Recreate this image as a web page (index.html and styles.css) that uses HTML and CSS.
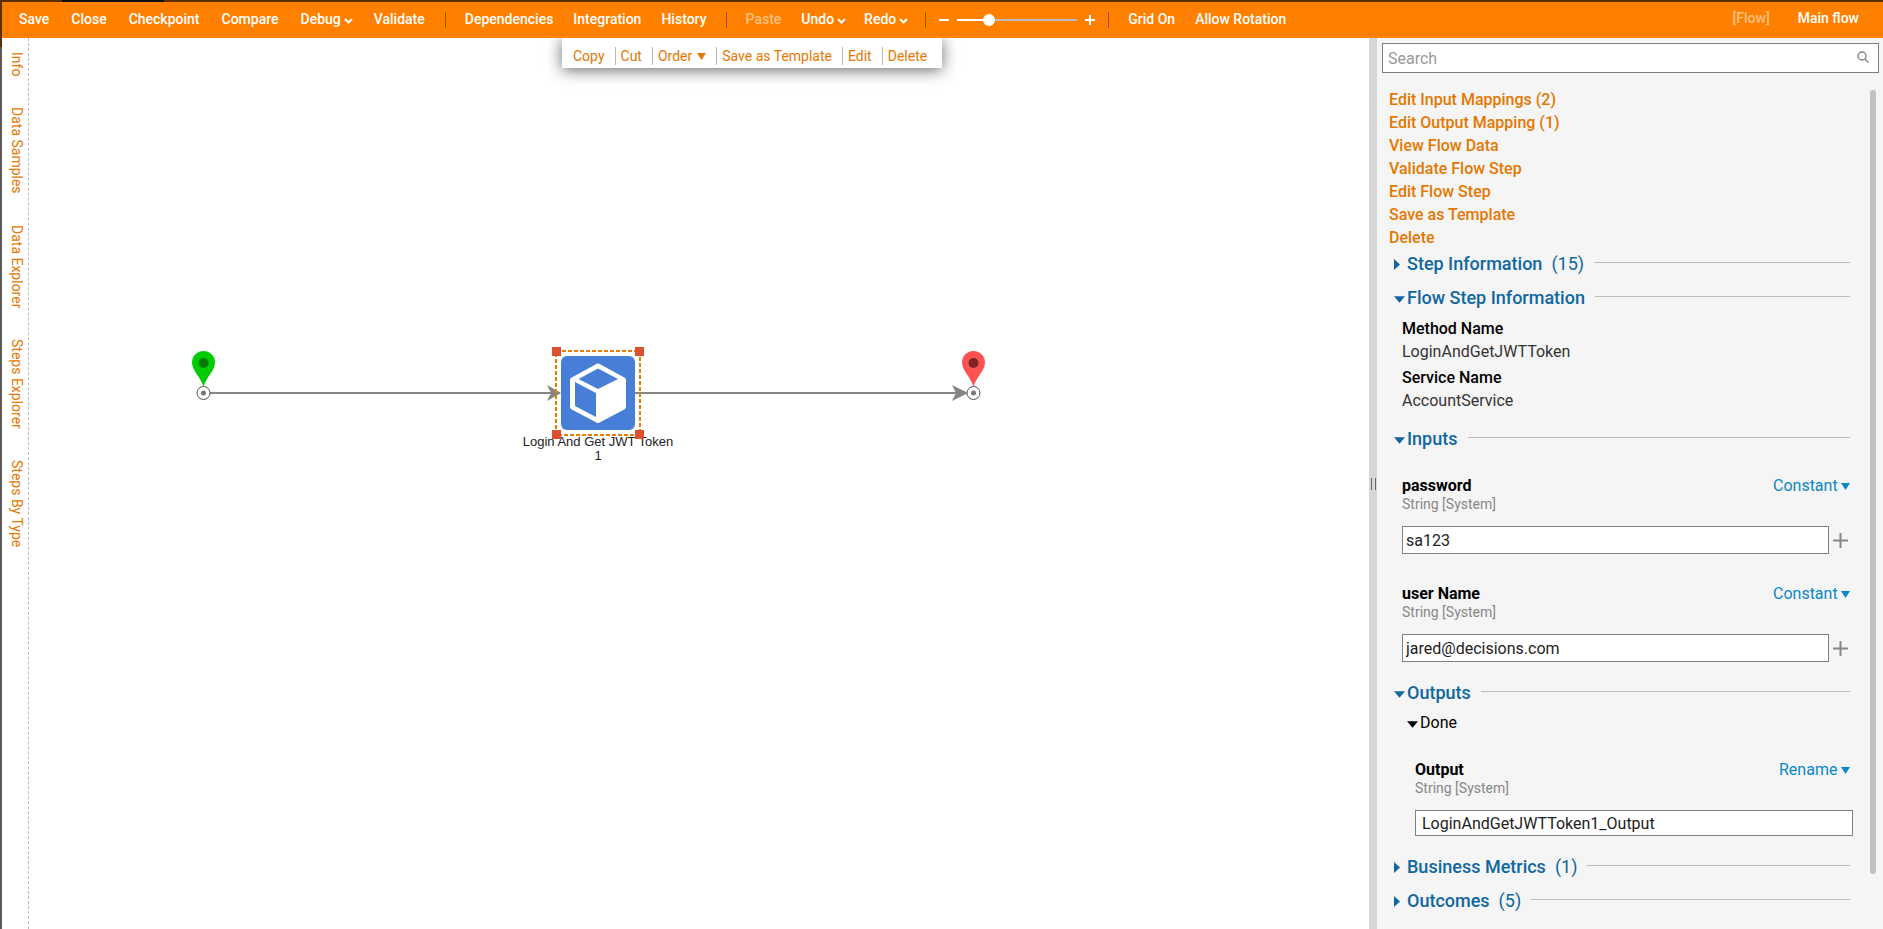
FILE: index.html
```html
<!DOCTYPE html>
<html lang="en">
<head>
<meta charset="utf-8">
<title>Flow Designer</title>
<link rel="stylesheet" href="styles.css">
</head>
<body>
<div class="app">
  <header class="toolbar">
    <div class="group main-group">
      <button class="tool">Save</button>
      <button class="tool">Close</button>
      <button class="tool">Checkpoint</button>
      <button class="tool">Compare</button>
      <button class="tool has-menu">Debug<svg class="chevron" viewBox="0 0 9 6"><path d="M1 1l3.5 3.5L8 1"/></svg></button>
      <button class="tool">Validate</button>
    </div>
    <div class="group">
      <button class="tool">Dependencies</button>
      <button class="tool">Integration</button>
      <button class="tool">History</button>
    </div>
    <div class="group">
      <button class="tool" disabled>Paste</button>
      <button class="tool has-menu">Undo<svg class="chevron" viewBox="0 0 9 6"><path d="M1 1l3.5 3.5L8 1"/></svg></button>
      <button class="tool has-menu">Redo<svg class="chevron" viewBox="0 0 9 6"><path d="M1 1l3.5 3.5L8 1"/></svg></button>
    </div>
    <div class="group zoom">
      <button class="zoom-btn" aria-label="Zoom out"><svg viewBox="0 0 10 10"><path d="M0 5h10"/></svg></button>
      <input class="zoom-range" type="range" min="0" max="100" value="24" aria-label="Zoom">
      <button class="zoom-btn" aria-label="Zoom in"><svg viewBox="0 0 10 10"><path d="M0 5h10M5 0v10"/></svg></button>
    </div>
    <div class="group">
      <button class="tool">Grid On</button>
      <button class="tool">Allow Rotation</button>
    </div>
    <div class="crumbs">
      <span class="crumb-type">[Flow]</span>
      <a class="crumb" href="#">Main flow</a>
    </div>
  </header>

  <div class="workspace">
    <nav class="side-tabs">
      <button class="side-tab">Info</button>
      <button class="side-tab">Data Samples</button>
      <button class="side-tab">Data Explorer</button>
      <button class="side-tab">Steps Explorer</button>
      <button class="side-tab">Steps By Type</button>
    </nav>

    <main class="canvas">
      <div class="step-menu">
        <button class="step-action">Copy</button>
        <button class="step-action">Cut</button>
        <button class="step-action">Order<svg class="caret" viewBox="0 0 9 7"><path d="M0 0h9L4.5 7z"/></svg></button>
        <button class="step-action">Save as Template</button>
        <button class="step-action">Edit</button>
        <button class="step-action">Delete</button>
      </div>

      <svg class="wires" viewBox="0 0 1000 400" width="1000" height="400">
        <g fill="#858585">
          <path d="M181 354h350v2H181zM606 354h326v2H606z"/>
          <path d="M518 347l14 8-14 8 4-8zM923 347l16 8-16 8 4-8z"/>
        </g>
        <g fill="#fff" stroke="#555">
          <circle cx="174.500" cy="355" r="6.500"/>
          <circle cx="944.500" cy="355" r="6.500"/>
        </g>
        <g fill="#777">
          <circle cx="174.500" cy="355" r="2.500"/>
          <circle cx="944.500" cy="355" r="2.500"/>
        </g>
        <path fill="#00cc03" d="M174.500 349C172 339 163 333 163 324.500a11.500 11.500 0 0 1 23 0C186 333 177 339 174.500 349z"/>
        <circle fill="#067a06" cx="174.500" cy="325" r="5"/>
        <path fill="#ff5252" d="M944.500 349C942 339 933 333 933 324.500a11.500 11.500 0 0 1 23 0C956 333 947 339 944.500 349z"/>
        <circle fill="#7f2424" cx="944.500" cy="325" r="5"/>
      </svg>

      <div class="step">
        <svg class="step-icon" viewBox="0 0 74 74">
          <rect width="74" height="74" rx="6" fill="#467ed8"/>
          <path fill="#fff" stroke="#fff" stroke-width="5" stroke-linejoin="round" d="M37 10L62.500 24v27L37 64.500 11.500 51V24z"/>
          <path fill="#467ed8" d="M37 12.500L57 23 37 33 17.500 23zM14 26l21 11v24L14 50z"/>
        </svg>
        <div class="step-label">Login And Get JWT Token 1</div>
        <svg class="selection" viewBox="0 0 92 92">
          <rect x="4" y="4" width="84" height="84" fill="none" stroke="#e67e00" stroke-width="2" stroke-dasharray="4 2"/>
          <path fill="#dc5033" d="M0 0h9v9H0zM83 0h9v9h-9zM0 83h9v9H0zM83 83h9v9h-9z"/>
        </svg>
      </div>
    </main>

    <div class="splitter"><span class="grip"></span></div>

    <aside class="panel">
      <div class="search">
        <input class="search-input" type="text" placeholder="Search" aria-label="Search">
        <svg class="search-icon" viewBox="0 0 12 12"><circle cx="5" cy="5" r="4"/><path d="M8 8l3.500 3.500"/></svg>
      </div>
      <div class="panel-body">
        <div class="properties">
          <ul class="links">
            <li><a href="#">Edit Input Mappings (2)</a></li>
            <li><a href="#">Edit Output Mapping (1)</a></li>
            <li><a href="#">View Flow Data</a></li>
            <li><a href="#">Validate Flow Step</a></li>
            <li><a href="#">Edit Flow Step</a></li>
            <li><a href="#">Save as Template</a></li>
            <li><a href="#">Delete</a></li>
          </ul>

          <button class="section"><svg class="closed" viewBox="0 0 6 11"><path d="M0 0l6 5.500L0 11z"/></svg>Step Information<span class="count">(15)</span></button>

          <button class="section"><svg class="open" viewBox="0 0 10 6"><path d="M0 0h10L5 6z"/></svg>Flow Step Information</button>
          <dl class="facts">
            <dt>Method Name</dt>
            <dd>LoginAndGetJWTToken</dd>
            <dt>Service Name</dt>
            <dd>AccountService</dd>
          </dl>

          <button class="section"><svg class="open" viewBox="0 0 10 6"><path d="M0 0h10L5 6z"/></svg>Inputs</button>
          <div class="field">
            <div class="field-head">
              <label class="field-name" for="password">password</label>
              <span class="mode"><select class="mode-select" aria-label="password mapping"><option>Constant</option></select><svg class="caret" viewBox="0 0 9 7"><path d="M0 0h9L4.500 7z"/></svg></span>
            </div>
            <div class="field-type">String [System]</div>
            <div class="field-row">
              <input class="text-box" id="password" type="text" value="sa123">
              <button class="add" aria-label="Add"><svg viewBox="0 0 15 15"><path d="M0 7.500h15M7.500 0v15"/></svg></button>
            </div>
          </div>
          <div class="field">
            <div class="field-head">
              <label class="field-name" for="username">user Name</label>
              <span class="mode"><select class="mode-select" aria-label="user Name mapping"><option>Constant</option></select><svg class="caret" viewBox="0 0 9 7"><path d="M0 0h9L4.500 7z"/></svg></span>
            </div>
            <div class="field-type">String [System]</div>
            <div class="field-row">
              <input class="text-box" id="username" type="text" value="jared@decisions.com">
              <button class="add" aria-label="Add"><svg viewBox="0 0 15 15"><path d="M0 7.500h15M7.500 0v15"/></svg></button>
            </div>
          </div>

          <button class="section"><svg class="open" viewBox="0 0 10 6"><path d="M0 0h10L5 6z"/></svg>Outputs</button>
          <div class="nested">
            <button class="outcome"><svg class="open" viewBox="0 0 10 6"><path d="M0 0h10L5 6z"/></svg>Done</button>
            <div class="field">
              <div class="field-head">
                <label class="field-name" for="output">Output</label>
                <span class="mode"><select class="mode-select" aria-label="Output mapping"><option>Rename</option></select><svg class="caret" viewBox="0 0 9 7"><path d="M0 0h9L4.500 7z"/></svg></span>
              </div>
              <div class="field-type">String [System]</div>
              <div class="field-row">
                <input class="text-box wide" id="output" type="text" value="LoginAndGetJWTToken1_Output">
              </div>
            </div>
          </div>

          <button class="section"><svg class="closed" viewBox="0 0 6 11"><path d="M0 0l6 5.500L0 11z"/></svg>Business Metrics<span class="count">(1)</span></button>
          <button class="section"><svg class="closed" viewBox="0 0 6 11"><path d="M0 0l6 5.500L0 11z"/></svg>Outcomes<span class="count">(5)</span></button>
        </div>
        <div class="scroll-track"><div class="scroll-thumb"></div></div>
      </div>
    </aside>
  </div>
</div>
</body>
</html>
```

FILE: styles.css
```css
* {
  box-sizing: border-box;
}

body {
  margin: 0;
  font-family: Roboto, "Liberation Sans", sans-serif;
  font-size: 16px;
  color: #000;
}

button,
input,
select {
  margin: 0;
  padding: 0;
  border: 0;
  background: none;
  font: inherit;
  color: inherit;
}

a {
  color: inherit;
  text-decoration: none;
}

svg {
  display: block;
  flex: none;
}

.app {
  display: flex;
  flex-direction: column;
  height: 100vh;
  padding: 2px 0 0 2px;
  overflow: hidden;
  background:
    linear-gradient(#111, #111) 62px 0 / 102px 2px no-repeat,
    linear-gradient(#5c2e00, #5c2e00) 0 0 / 100% 47px no-repeat,
    #5a5a5a;
}

/* Toolbar */

.toolbar {
  display: flex;
  align-items: center;
  height: 36px;
  padding: 0 24px 0 6px;
  background: #ff8000;
  color: #fff;
  font-size: 14px;
  font-weight: 500;
  line-height: 20px;
}

.group {
  display: flex;
  align-items: center;
}

.group + .group::before {
  content: "";
  width: 1px;
  height: 16px;
  margin: 0 9px;
  background: #a65300;
}

.tool {
  display: flex;
  align-items: center;
  gap: 3px;
  padding: 0 10px 2px;
}

.main-group .tool {
  padding: 0 11px 2px;
}

.has-menu {
  padding-right: 8px;
}

.main-group .has-menu {
  padding-right: 10px;
}

.tool:disabled {
  color: #ffc080;
}

.chevron {
  width: 9px;
  height: 6px;
  margin-top: 3px;
  fill: none;
  stroke: #fff;
  stroke-width: 2;
}

.zoom-btn svg {
  width: 10px;
  height: 10px;
  stroke: #fff;
  stroke-width: 2;
}

.zoom {
  padding-right: 4px;
}

.zoom-btn {
  margin-left: 4px;
}

.zoom-range {
  appearance: none;
  width: 120px;
  height: 12px;
  margin: 0 4px 0 8px;
  background: linear-gradient(90deg, #fff 27%, #bcbcbc 27%) center / 100% 2px no-repeat;
}

.zoom-range::-webkit-slider-thumb {
  appearance: none;
  width: 12px;
  height: 12px;
  border-radius: 50%;
  background: #fff;
}

.crumbs {
  display: flex;
  gap: 28px;
  margin-left: auto;
  padding-bottom: 4px;
}

.crumb-type {
  color: #ffc080;
}

/* Workspace */

.workspace {
  display: flex;
  flex: 1;
  min-height: 0;
  background: #fff;
}

.side-tabs {
  display: flex;
  flex-direction: column;
  align-items: center;
  gap: 31px;
  width: 27px;
  padding: 14px 0 0 3px;
  border-right: 1px dashed #bbb;
}

.side-tab {
  writing-mode: vertical-rl;
  color: #e67700;
  font-size: 14px;
  line-height: 20px;
}

.canvas {
  position: relative;
  flex: 1;
  min-width: 0;
  overflow: hidden;
}

.step-menu {
  position: absolute;
  top: 0;
  left: 533px;
  display: flex;
  align-items: center;
  height: 30px;
  padding: 6px 5px 0;
  background: #fff;
  box-shadow: 0 2px 16px rgba(0, 0, 0, 0.6);
  color: #e67700;
  font-size: 14px;
  line-height: 18px;
}

.step-action {
  display: flex;
  align-items: center;
  gap: 5px;
  padding: 0 10px 0 5px;
  border-left: 1px solid #bbb;
}

.step-action:first-child {
  border-color: transparent;
}

.caret {
  width: 9px;
  height: 7px;
  fill: currentColor;
}

.wires {
  position: absolute;
  top: 0;
  left: 0;
}

.step {
  position: absolute;
  top: 309px;
  left: 489px;
  width: 160px;
  padding-top: 9px;
}

.step-icon {
  width: 74px;
  height: 74px;
  margin: 0 auto;
}

.selection {
  position: absolute;
  top: 0;
  left: 34px;
  width: 92px;
  height: 92px;
}

.step-label {
  padding-top: 5px;
  color: #222;
  font-family: "Liberation Sans", Arial, sans-serif;
  font-size: 13px;
  line-height: 14px;
  text-align: center;
}

.splitter {
  display: flex;
  align-items: center;
  justify-content: center;
  width: 8px;
  background: #d6d6d6;
}

.grip {
  width: 5px;
  height: 12px;
  border: solid #666;
  border-width: 0 1px;
}

/* Properties panel */

.panel {
  display: flex;
  flex-direction: column;
  width: 506px;
  padding-top: 5px;
  background: #f5f5f5;
}

.search {
  position: relative;
  padding: 0 4px 0 5px;
}

.search-input {
  display: block;
  width: 100%;
  height: 30px;
  padding: 0 30px 0 5px;
  border: 1px solid #808080;
  background: #fff;
}

.search-input::placeholder {
  color: #999;
}

.search-icon {
  position: absolute;
  top: 8px;
  right: 14px;
  width: 12px;
  height: 12px;
  fill: none;
  stroke: #888;
  stroke-width: 1.5;
}

.panel-body {
  display: flex;
  flex: 1;
  min-height: 0;
  padding-top: 15px;
}

.properties {
  flex: 1;
  min-width: 0;
  padding: 0 20px 0 12px;
}

.links {
  margin: 0;
  padding: 0;
  list-style: none;
  color: #e67700;
  font-weight: 500;
  line-height: 23px;
}

.section {
  display: flex;
  align-items: center;
  width: 100%;
  height: 24px;
  margin-top: 3px;
  padding-left: 5px;
  color: #0f67a1;
  font-size: 18px;
  font-weight: 500;
  line-height: 24px;
}

.section + .section {
  margin-top: 10px;
}

.section::after {
  content: "";
  flex: 1;
  height: 1px;
  margin: 0 0 3px 10px;
  background: #bbb;
}

.count {
  margin-left: 9px;
  font-weight: 400;
}

.closed {
  width: 6px;
  height: 11px;
  margin-right: 7px;
  fill: currentColor;
}

.open {
  width: 11px;
  height: 7px;
  margin: 3px 2px 0 0;
  fill: currentColor;
}

.facts {
  margin: 4px 0 15px;
  padding-left: 13px;
  line-height: 23px;
}

.facts dt {
  padding-top: 3px;
  font-weight: 500;
}

.facts dd {
  margin: 0;
  color: #333;
}

.field {
  padding: 14px 0 16px 13px;
}

.section + .field {
  padding-top: 25px;
}

.nested .field {
  padding-top: 27px;
}

.field-head {
  display: flex;
  align-items: center;
  justify-content: space-between;
  line-height: 20px;
}

.field-name {
  font-weight: 700;
}

.field-type {
  color: #888;
  font-size: 14px;
  line-height: 16px;
}

.mode {
  display: flex;
  align-items: center;
  gap: 3px;
  color: #0a87c8;
}

.mode-select {
  appearance: none;
}

.field-row {
  display: flex;
  align-items: center;
  gap: 4px;
  padding-top: 14px;
}

.text-box {
  flex: 1;
  min-width: 0;
  height: 28px;
  padding: 0 3px;
  border: 1px solid #808080;
  background: #fff;
  color: #222;
}

.text-box.wide {
  height: 26px;
  margin-right: -3px;
  padding: 0 6px;
}

.add {
  padding-right: 2px;
}

.add svg {
  width: 15px;
  height: 15px;
  stroke: #888;
  stroke-width: 2;
}

.nested {
  padding: 8px 0 0 13px;
}

.outcome {
  display: flex;
  align-items: center;
  padding-left: 5px;
  line-height: 20px;
}

.scroll-track {
  width: 13px;
  padding-top: 2px;
}

.scroll-thumb {
  width: 6px;
  height: calc(100% - 55px);
  border-radius: 3px;
  background: #c1c1c1;
}
```
